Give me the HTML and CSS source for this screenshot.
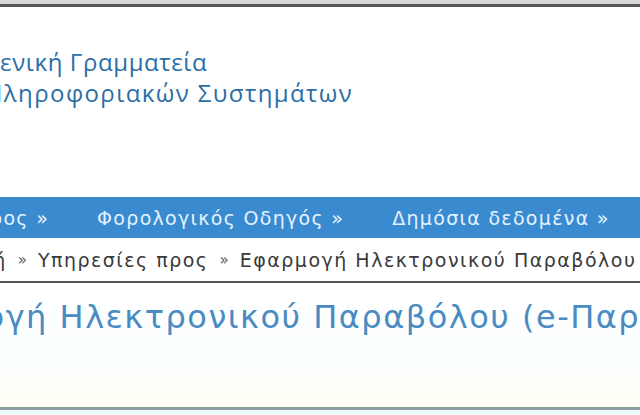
FILE: index.html
```html
<!DOCTYPE html>
<html lang="el">
<head>
<meta charset="utf-8">
<title>ΓΓΠΣ</title>
<link rel="stylesheet" href="styles.css">
</head>
<body>
<div class="chrome"></div>
<header class="header">
  <div class="logo">
    <div class="logo-line l1">Γενική Γραμματεία</div>
    <div class="logo-line l2">Πληροφοριακών Συστημάτων</div>
  </div>
</header>
<nav class="nav">
  <a class="nav-item n1">Υπηρεσίες προς »</a>
  <a class="nav-item">Φορολογικός Οδηγός »</a>
  <a class="nav-item">Δημόσια δεδομένα »</a>
</nav>
<div class="crumbs">
  <span class="crumb c1">Αρχική</span><span class="sep">»</span><span class="crumb">Υπηρεσίες προς</span><span class="sep">»</span><span class="crumb">Εφαρμογή Ηλεκτρονικού Παραβόλου</span>
</div>
<section class="title-box">
  <h1 class="title">Εφαρμογή Ηλεκτρονικού Παραβόλου (e-Παράβολο)</h1>
</section>
<div class="foot"></div>
</body>
</html>
```
FILE: styles.css
```css
html, body {
  margin: 0;
  padding: 0;
  background: #ffffff;
  overflow: hidden;
  width: 640px;
  height: 415px;
}
body {
  font-family: "DejaVu Sans", "Open Sans", sans-serif;
}
.chrome {
  height: 4px;
  background: #d8d8d8;
  border-bottom: 3px solid #555555;
}
.header {
  height: 190px;
  overflow: hidden;
}
.logo {
  padding-top: 39px;
  color: #2b6ea6;
  font-family: "Open Sans", sans-serif;
  font-size: 24px;
  letter-spacing: 1.1px;
  line-height: 31px;
  white-space: nowrap;
}
.l1 { margin-left: -13px; letter-spacing: 0.6px; }
.l2 { margin-left: -15px; letter-spacing: 1.4px; }
.nav {
  height: 41px;
  background: #3a8ad0;
  display: flex;
  align-items: center;
  white-space: nowrap;
  overflow: hidden;
  gap: 48px;
  font-size: 19px;
  letter-spacing: 1.3px;
  color: #e4f2ff;
}
.nav-item { flex: none; }
.n1 { margin-left: -139px; }
.crumbs {
  display: flex;
  align-items: center;
  white-space: nowrap;
  overflow: hidden;
  font-size: 19px;
  letter-spacing: 1.5px;
  color: #3a3a3a;
  border-bottom: 2px solid #555555;
  box-sizing: border-box;
  height: 45px;
}
.c1 { margin-left: -68px; }
.sep { color: #555; margin: 0 11px; font-size: 15px; letter-spacing: 0; }
.title-box {
  height: 127px;
  box-sizing: border-box;
  background: linear-gradient(#ffffff 0%, #fbfeff 60%, #fffdf4 100%);
  border-bottom: 3px solid #8c9f9c;
  overflow: hidden;
}
.title {
  margin: 0;
  padding-top: 15px;
  font-weight: normal;
  font-size: 32px;
  letter-spacing: 1.5px;
  color: #4a8bc2;
  white-space: nowrap;
  margin-left: -126px;
}
.foot {
  height: 10px;
  background: #eefafa;
}
```
